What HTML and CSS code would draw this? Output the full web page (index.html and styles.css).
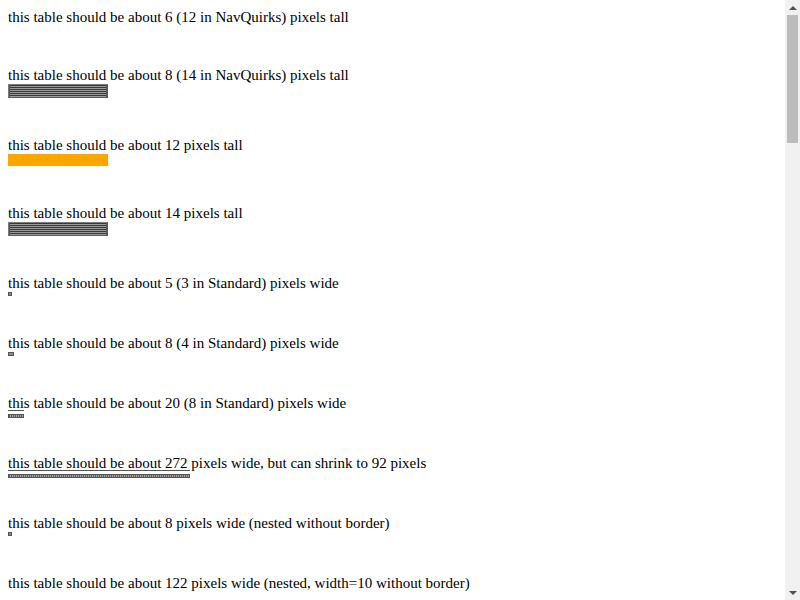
FILE: index.html
```html
<!DOCTYPE html>
<html>
<head>
<meta charset="utf-8">
<link rel="stylesheet" href="styles.css">
</head>
<body>
<div class="sec first">
  <div class="txt">this table should be about 6 (12 in NavQuirks) pixels tall</div>
  <div class="bar empty"></div>
</div>
<div class="sec">
  <div class="txt">this table should be about 8 (14 in NavQuirks) pixels tall</div>
  <div class="bar stripes"></div>
</div>
<div class="sec">
  <div class="txt">this table should be about 12 pixels tall</div>
  <div class="bar orange"></div>
</div>
<div class="sec">
  <div class="txt">this table should be about 14 pixels tall</div>
  <div class="bar stripes"></div>
</div>
<div class="sec">
  <div class="txt">this table should be about 5 (3 in Standard) pixels wide</div>
  <div class="bar small w4"></div>
</div>
<div class="sec">
  <div class="txt">this table should be about 8 (4 in Standard) pixels wide</div>
  <div class="bar small w6"></div>
</div>
<div class="sec framed">
  <div class="txt">this table should be about 20 (8 in Standard) pixels wide</div>
  <div class="frame w16"><div class="bar dotted"></div></div>
</div>
<div class="sec framed">
  <div class="txt">this table should be about 272 pixels wide, but can shrink to 92 pixels</div>
  <div class="frame w182"><div class="bar dotted"></div></div>
</div>
<div class="sec">
  <div class="txt">this table should be about 8 pixels wide (nested without border)</div>
  <div class="bar small w4"></div>
</div>
<div class="sec">
  <div class="txt">this table should be about 122 pixels wide (nested, width=10 without border)</div>
</div>
<div class="scrollbar">
  <div class="arrow up"></div>
  <div class="track"><div class="thumb"></div></div>
  <div class="arrow down"></div>
</div>
</body>
</html>
```

FILE: styles.css
```css
html, body {
  margin: 0;
  padding: 0;
}
html {
  overflow: hidden;
}
body {
  padding: 8px;
  height: 600px;
  box-sizing: border-box;
  font-family: "Liberation Serif", Tinos, "Times New Roman", serif;
  font-size: 15px;
  color: #000;
  background: #fff;
}
.sec {
  display: flex;
  flex-direction: column;
  align-items: flex-start;
  margin-bottom: 38px;
}
.sec.framed {
  margin-bottom: 36px;
}
.txt {
  line-height: 18px;
  height: 18px;
  white-space: nowrap;
}
.bar {
  box-sizing: border-box;
}
.empty {
  height: 2px;
  width: 2px;
}
.stripes {
  width: 100px;
  height: 14px;
  border: 1px solid #7a7a7a;
  border-right-color: #5a5a5a;
  border-bottom-color: #5a5a5a;
  background:
    linear-gradient(to right, #555 0 1px, transparent 1px calc(100% - 1px), #555 calc(100% - 1px)),
    repeating-linear-gradient(to bottom, #3a3a3a 0 1px, #9a9a9a 1px 2px);
}
.orange {
  width: 100px;
  height: 12px;
  background: #ffa500;
}
.small {
  height: 4px;
  border: 1px solid #555;
  background: #8a8a8a;
}
.w4 { width: 4px; }
.w6 { width: 6px; }
.frame {
  margin-top: -2px;
  border-top: 1px solid #555;
  padding-top: 3px;
}
.w16 { width: 16px; }
.w182 { width: 182px; }
.dotted {
  width: 100%;
  height: 4px;
  border: 1px solid #555;
  background: repeating-linear-gradient(to right, #5e5e5e 0 1px, #a8a8a8 1px 2px);
}
.scrollbar {
  position: fixed;
  top: 0;
  right: 0;
  width: 15px;
  height: 600px;
  background: #f1f1f1;
  display: flex;
  flex-direction: column;
}
.arrow {
  height: 15px;
  display: flex;
  align-items: center;
  justify-content: center;
}
.arrow::before {
  content: "";
  width: 0;
  height: 0;
  border-left: 4px solid transparent;
  border-right: 4px solid transparent;
}
.arrow.up::before {
  border-bottom: 4px solid #505050;
}
.arrow.down::before {
  border-top: 4px solid #505050;
}
.track {
  flex: 1;
  padding: 0 2px;
}
.thumb {
  height: 128px;
  background: #bcbcbc;
}
```
